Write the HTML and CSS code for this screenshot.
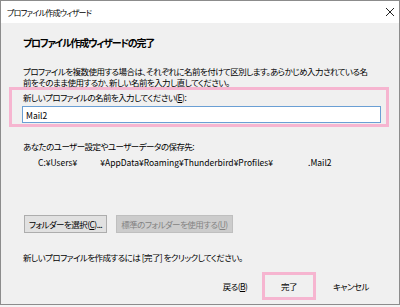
FILE: index.html
```html
<!DOCTYPE html>
<html lang="ja">
<head>
  <meta charset="UTF-8">
  <title>プロファイル作成ウィザード</title>
  <link rel="stylesheet" href="styles.css">
</head>
<body>
  <div class="window">
    <div class="titlebar">
      <span class="title">プロファイル作成ウィザード</span>
      <svg class="close" width="10" height="10" viewBox="0 0 10 10">
        <path d="M1 1 L9 9 M9 1 L1 9" stroke="#222" stroke-width="1" fill="none"/>
      </svg>
    </div>

    <div class="content">
      <h1>プロファイル作成ウィザードの完了</h1>
      <p class="intro">プロファイルを複数使用する場合は、それぞれに名前を付けて区別します。あらかじめ入力されている名<br>前をそのまま使用するか、新しい名前を入力し直してください。</p>

      <div class="name-field mark">
        <label for="profile-name">新しいプロファイルの名前を入力してください(<u>E</u>):</label>
        <input id="profile-name" type="text" value="Mail2">
      </div>

      <p class="folder-label">あなたのユーザー設定やユーザーデータの保存先:</p>
      <p class="path"><span>C:¥Users¥</span><span class="blank users"></span><span>¥AppData¥Roaming¥Thunderbird¥Profiles¥</span><span class="blank profile"></span><span>.Mail2</span></p>

      <div class="folder-buttons">
        <button class="choose">フォルダーを選択(<u>C</u>)...</button>
        <button class="default" disabled>標準のフォルダーを使用する(<u>U</u>)</button>
      </div>

      <p class="hint">新しいプロファイルを作成するには [完了] をクリックしてください。</p>
    </div>

    <div class="footer">
      <button class="flat">戻る(<u>B</u>)</button>
      <button class="flat mark">完了</button>
      <button class="flat cancel">キャンセル</button>
    </div>
  </div>
</body>
</html>
```

FILE: styles.css
```css
html, body {
  margin: 0;
  background: #f4f4f4;
}
body {
  font-family: "Noto Sans CJK JP", "Noto Sans", sans-serif;
  font-size: 8.5px;
  letter-spacing: -0.55px;
  font-feature-settings: "palt";
  color: #000;
}
.window {
  width: 400px;
  height: 305px;
  box-sizing: border-box;
  border: 1px solid #8c8c8c;
  background: #f0f0f0;
  display: flex;
  flex-direction: column;
}
.titlebar {
  height: 22px;
  background: #fff;
  display: flex;
  align-items: center;
  justify-content: space-between;
  padding: 0 4px 0 6px;
}
.title {
  font-size: 8px;
  letter-spacing: -0.75px;
}
.content {
  flex: 1;
  padding: 0 0 0 21px;
}
h1 {
  font-size: 10px;
  letter-spacing: -1.25px;
  font-weight: bold;
  line-height: 14px;
  margin: 13px 0 0 1px;
}
p {
  margin: 0;
  line-height: 12px;
  white-space: nowrap;
}
.intro {
  line-height: 11px;
  margin: 16px 0 0 1px;
}
.mark {
  border: 3px solid #f6b5d0;
}
.name-field {
  margin: -1px 10px 0 -13px;
  padding: 1px 5px 1px 10px;
  display: flex;
  flex-direction: column;
}
.name-field label {
  line-height: 13px;
  padding-left: 1px;
}
.name-field input {
  margin-top: 2px;
  height: 17px;
  box-sizing: border-box;
  border: 1px solid #6a9fd4;
  background: #fff;
  font: inherit;
  letter-spacing: 0;
  padding: 0 3px;
  outline: none;
}
.folder-label {
  margin: 13px 0 0 1px;
}
.path {
  letter-spacing: 0;
  margin: 4px 0 0 16px;
}
.blank {
  display: inline-block;
}
.blank.users {
  width: 23px;
}
.blank.profile {
  width: 35px;
}
.folder-buttons {
  display: flex;
  gap: 9px;
  margin: 47px 0 0 2px;
}
button {
  font: inherit;
  letter-spacing: inherit;
  color: #000;
  height: 18px;
  padding: 0;
  box-sizing: border-box;
  white-space: nowrap;
}
.folder-buttons button {
  background: #e1e1e1;
  border: 1px solid #adadad;
}
.choose {
  width: 83px;
}
.default {
  width: 117px;
}
.folder-buttons .default {
  background: #cccccc;
  border-color: #bfbfbf;
  color: #838383;
}
.hint {
  margin: 18px 0 0 1px;
}
.footer {
  display: flex;
  justify-content: flex-end;
  padding: 0 21px 4px 0;
}
.flat {
  width: 54px;
  height: 28px;
  background: transparent;
  border: none;
}
.flat.mark {
  border: 3px solid #f6b5d0;
}
.cancel {
  margin-left: 8px;
}
```
